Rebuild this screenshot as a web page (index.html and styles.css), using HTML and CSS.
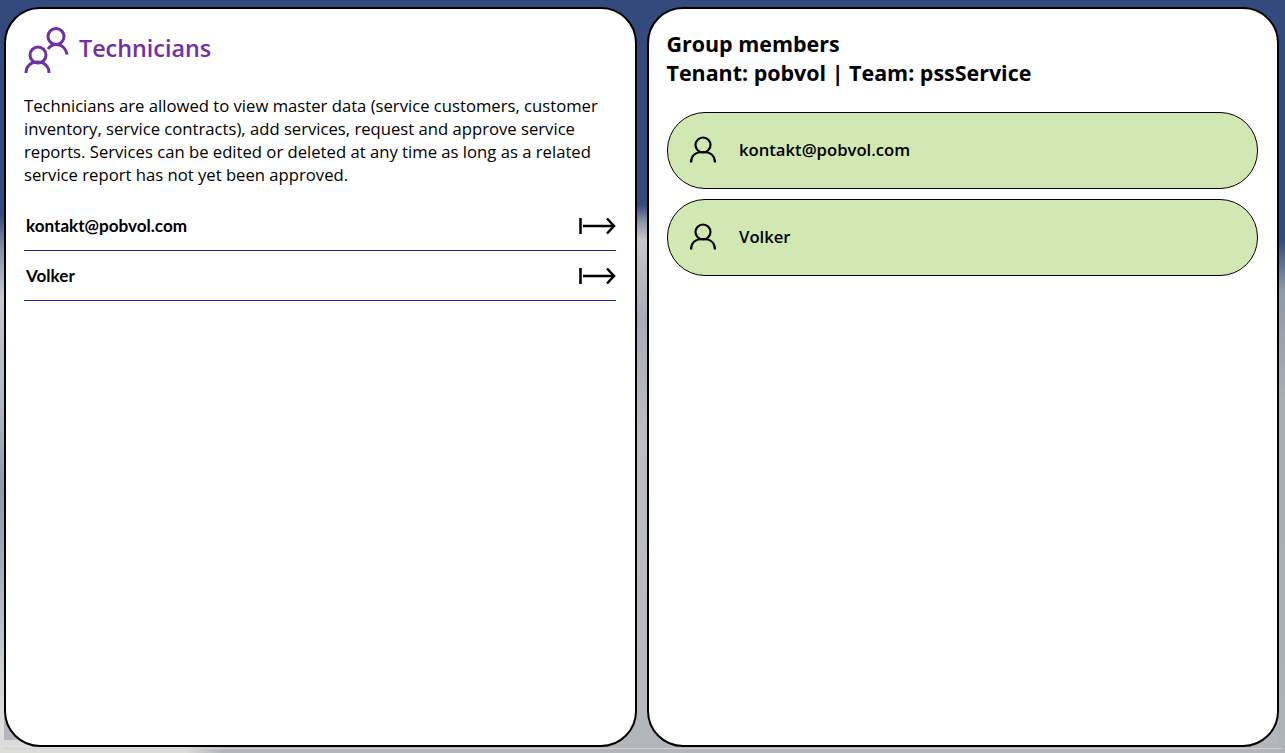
FILE: index.html
```html
<!DOCTYPE html>
<html lang="en">
<head>
<meta charset="utf-8">
<title>Technicians</title>
<link rel="stylesheet" href="styles.css">
</head>
<body>
<main class="page">
  <section class="panel panel-left">
    <header class="title-row">
      <svg class="group-icon" viewBox="0 0 46 48" width="46" height="48" aria-hidden="true">
        <g fill="none" stroke="#7030a0" stroke-width="3">
          <circle cx="32" cy="10.500" r="8"/>
          <path d="M24 23c2-3 5-4.500 8-4.500 6 0 10 4 11 10"/>
          <circle cx="14" cy="29" r="8"/>
          <path d="M2 47c0-7 5-11 11.500-11S25 40 25 47"/>
        </g>
      </svg>
      <h1 class="title">Technicians</h1>
    </header>
    <p class="intro">Technicians are allowed to view master data (service customers, customer inventory, service contracts), add services, request and approve service reports. Services can be edited or deleted at any time as long as a related service report has not yet been approved.</p>
    <ul class="tech-list">
      <li class="tech-row"><span>kontakt@pobvol.com</span>
        <svg class="arrow" viewBox="0 0 38 20" width="38" height="20" aria-hidden="true"><g fill="none" stroke="#000" stroke-width="2.500"><path d="M2.500 2v16"/><path d="M5 10h31"/><path d="M29 2.500l7 7.500-7 7.500"/></g></svg>
      </li>
      <li class="tech-row"><span>Volker</span>
        <svg class="arrow" viewBox="0 0 38 20" width="38" height="20" aria-hidden="true"><g fill="none" stroke="#000" stroke-width="2.500"><path d="M2.500 2v16"/><path d="M5 10h31"/><path d="M29 2.500l7 7.500-7 7.500"/></g></svg>
      </li>
    </ul>
  </section>
  <section class="panel panel-right">
    <h2 class="members-title">Group members<br>Tenant: pobvol | Team: pssService</h2>
    <ul class="member-list">
      <li class="member">
        <svg class="person" viewBox="0 0 28 30" width="28" height="30" aria-hidden="true"><g fill="none" stroke="#000" stroke-width="2.200"><circle cx="14" cy="10" r="7.500"/><path d="M2 27.500c0-7 5-10.500 12-10.500s12 3.500 12 10.500"/></g></svg>
        <span class="member-name">kontakt@pobvol.com</span>
      </li>
      <li class="member">
        <svg class="person" viewBox="0 0 28 30" width="28" height="30" aria-hidden="true"><g fill="none" stroke="#000" stroke-width="2.200"><circle cx="14" cy="10" r="7.500"/><path d="M2 27.500c0-7 5-10.500 12-10.500s12 3.500 12 10.500"/></g></svg>
        <span class="member-name">Volker</span>
      </li>
    </ul>
  </section>
</main>
</body>
</html>
```
FILE: styles.css
```css
* { box-sizing: border-box; }
html, body { margin: 0; height: 100%; }
body {
  background:
    linear-gradient(#cfd1d2, #cfd1d2) 3px 748px / 1279px 1px no-repeat,
    linear-gradient(to right, #dcdcd8 185px, rgba(220, 220, 216, 0) 225px) 0 740px / 225px 13px no-repeat,
    linear-gradient(to bottom, #344a7d 0, #344a7d 215px, #7f8aa3 245px, #c5c8cc 295px,
      #b4bac2 400px, #8c97ad 490px, #a9b0bf 580px, #c8cdd0 660px, #dfe0de 725px) 0 0 / 4px 753px no-repeat,
    linear-gradient(to bottom, #344a7d 0, #344a7d 240px, #8f99a4 290px,
      #a8aeb2 400px, #aab0b4 650px, #b0b4b8 753px) 1279px 0 / 6px 753px no-repeat,
    linear-gradient(to bottom,
      #344a7d 0, #344a7d 205px, #8d95a8 222px, #c4c7cb 240px,
      #a5acb6 320px, #bcbec4 440px, #b4b8bc 700px, #b2b6ba 753px);
  font-family: "Open Sans", sans-serif;
  color: #000;
  overflow: hidden;
}
.page {
  display: flex;
  gap: 10px;
  height: 753px;
  padding: 7px 6px 6px 4px;
}
.panel {
  flex: 1 1 0;
  background: #fff;
  border: 2px solid #000;
  border-radius: 36px;
}
.panel-left { padding: 17px 19px 0 18px; }
.panel-right { padding: 20px 19px 0 18px; }
.title-row {
  display: flex;
  align-items: center;
  gap: 9px;
  height: 48px;
}
.group-icon { flex: none; }
.title {
  margin: 0 0 4px;
  font-size: 23.330px;
  font-weight: 600;
  color: #7030a0;
  line-height: 30px;
}
.intro {
  margin: 20px 0 0;
  font-size: 16.670px;
  line-height: 23px;
  width: 590px;
}
.tech-list, .member-list { list-style: none; margin: 0; padding: 0; }
.tech-list { margin-top: 15px; }
.tech-row {
  display: flex;
  justify-content: space-between;
  align-items: center;
  height: 50px;
  padding-left: 2px;
  border-bottom: 1px solid #1f2f80;
  font-family: Lato, sans-serif;
  font-weight: 700;
  font-size: 17.100px;
}
.members-title {
  margin: 0;
  font-size: 21.450px;
  line-height: 29px;
  font-weight: 700;
}
.member-list {
  margin-top: 25px;
  display: flex;
  flex-direction: column;
  gap: 10.500px;
}
.member {
  display: flex;
  align-items: center;
  gap: 22.500px;
  height: 76.500px;
  padding-left: 21px;
  background: #d2e8b2;
  border: 1px solid #000;
  border-radius: 38px;
  font-size: 16.670px;
  font-weight: 600;
}
.person { flex: none; }
.member-name { margin-bottom: 2px; }
```
